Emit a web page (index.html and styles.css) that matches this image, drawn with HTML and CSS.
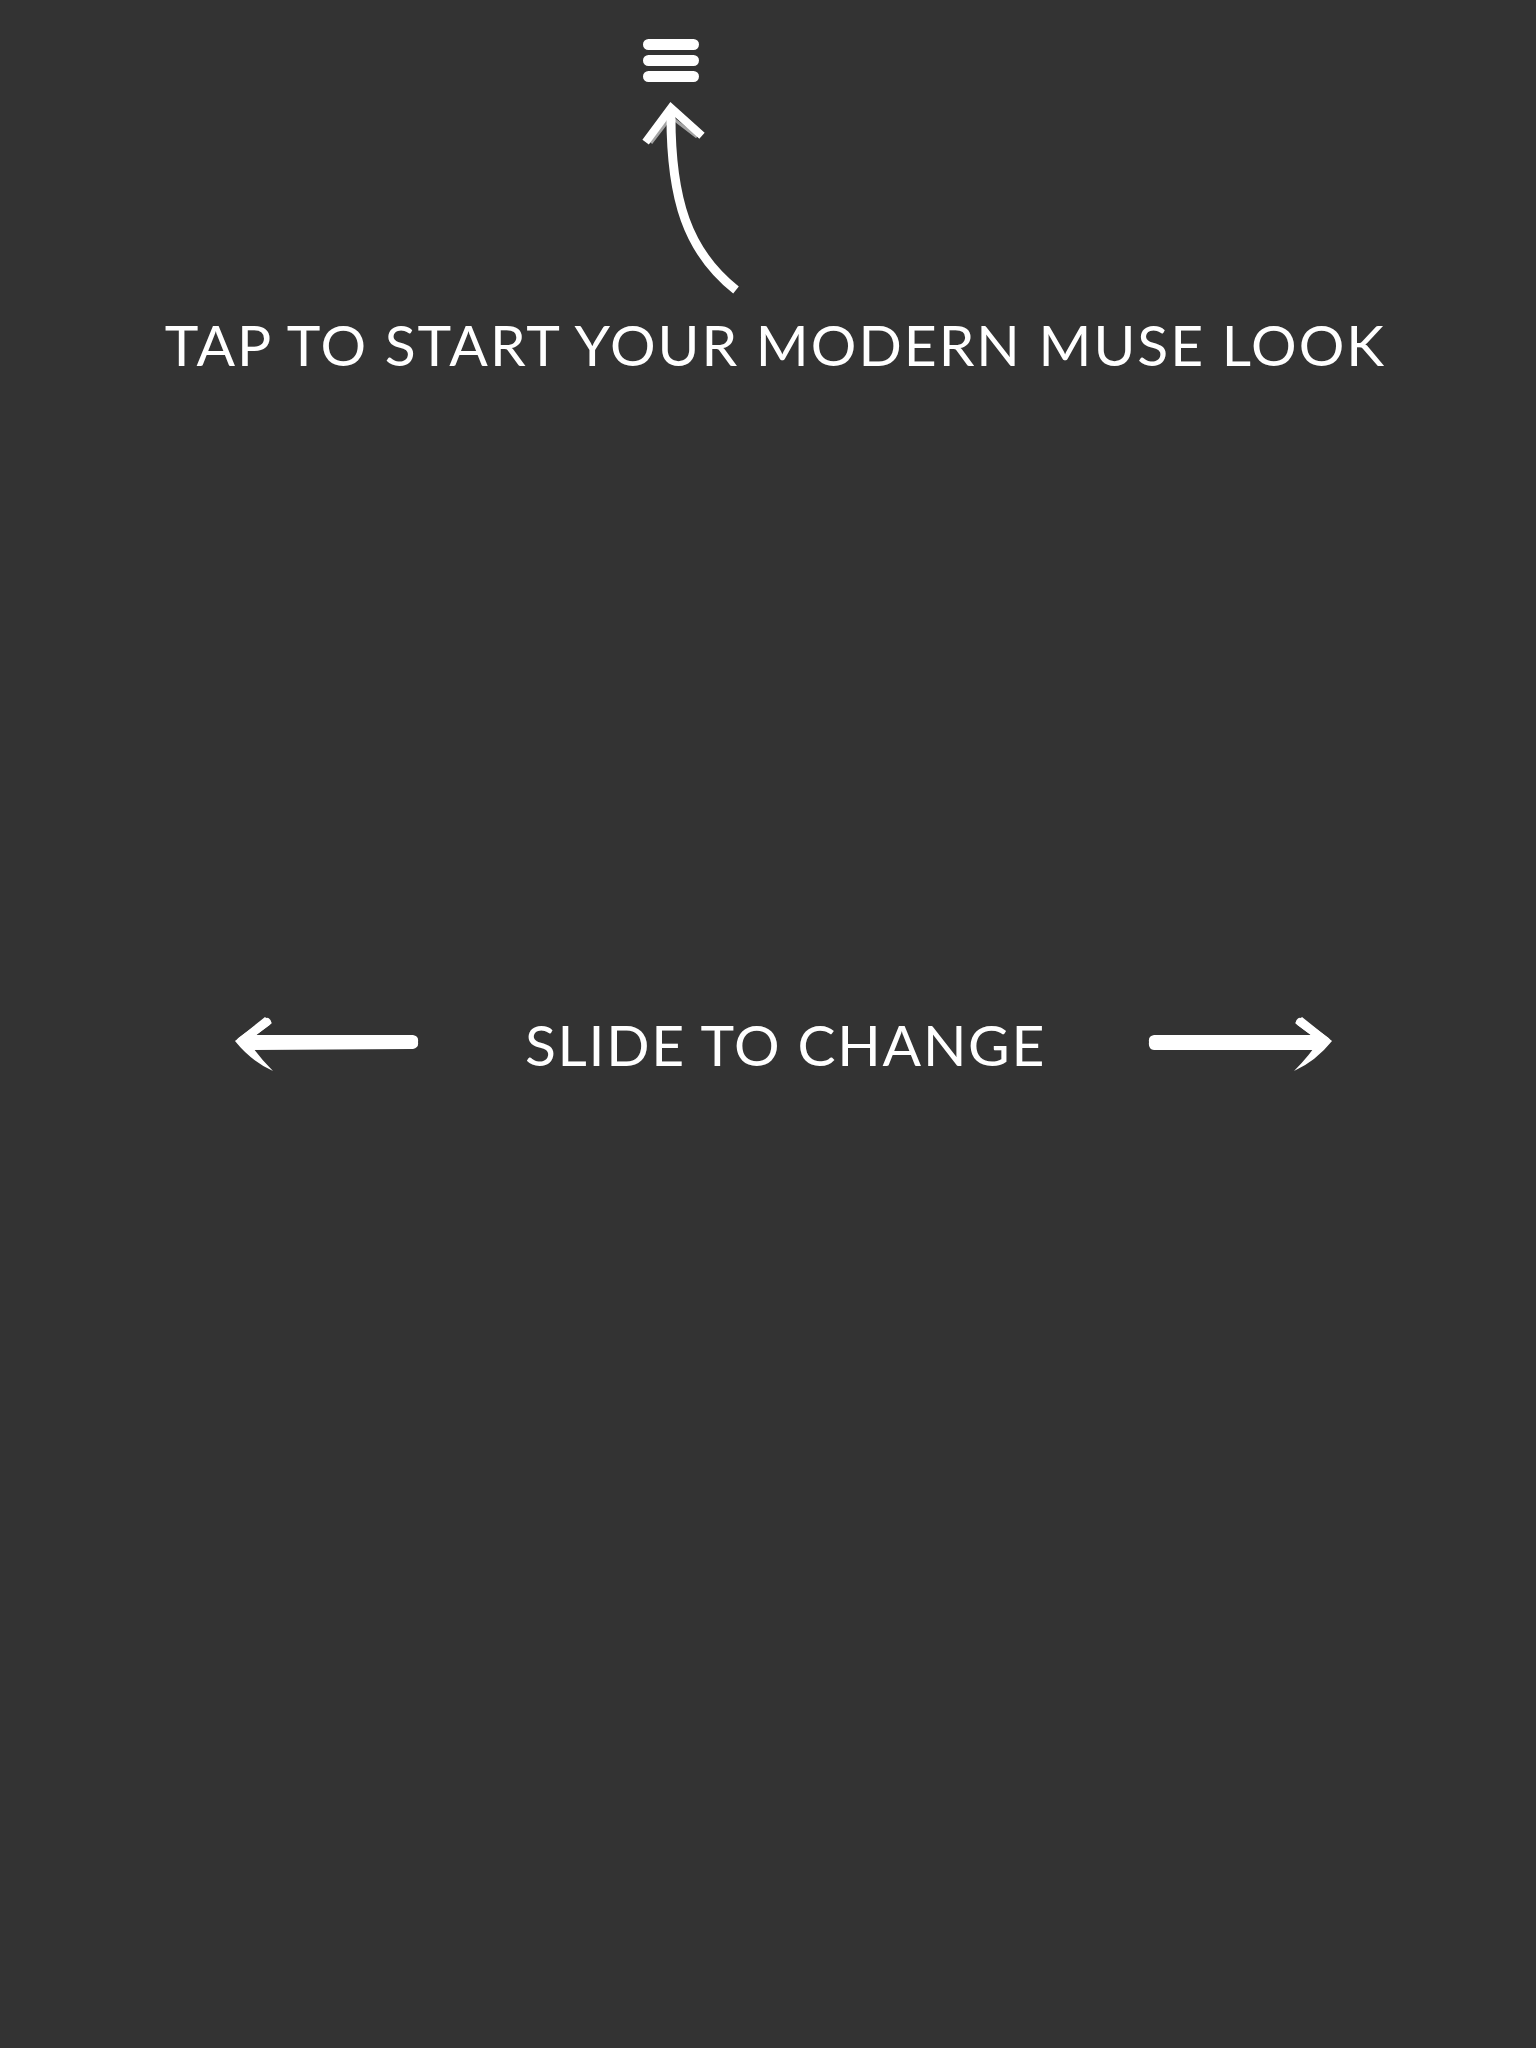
FILE: index.html
```html
<!DOCTYPE html>
<html lang="en">
<head>
<meta charset="utf-8">
<title>Modern Muse</title>
<link rel="stylesheet" href="styles.css">
</head>
<body>
<header class="top">
  <svg class="menu" viewBox="0 0 56 43" width="56" height="43" aria-label="Menu">
    <rect x="0" y="0" width="56" height="11" rx="5.5" fill="#fff"/>
    <rect x="0" y="16" width="56" height="11" rx="5.5" fill="#fff"/>
    <rect x="0" y="32" width="56" height="11" rx="5.5" fill="#fff"/>
  </svg>
  <svg class="curve" viewBox="640 100 105 200" width="105" height="200" aria-hidden="true">
    <path d="M671 110 C670 200 688 252 736 290" fill="none" stroke="#fff" stroke-width="9"/>
    <path d="M648 139 L671 108 L699 133" fill="none" stroke="#fff" stroke-width="8" stroke-linecap="square" stroke-linejoin="miter"/>
    <path d="M651 143 L671 117 L697 137" fill="none" stroke="#fff" stroke-width="3" opacity="0.55"/>
  </svg>
  <h1 class="tap">TAP TO START YOUR MODERN MUSE LOOK</h1>
</header>
<section class="slide">
  <svg class="arrow arrow-left" viewBox="0 0 184 56" width="184" height="56" aria-hidden="true">
    <path d="M12 18 L178 18 Q184 19 183 25 Q184 31 178 32 L12 33 Z" fill="#fff"/>
    <path d="M0 24 L30 0 L37 6 L12 25 Z" fill="#fff"/>
    <path d="M0 24 L12 22 Q22 38 38 54 Q16 44 0 24 Z" fill="#fff"/>
    <path d="M6 24 L32 5" fill="none" stroke="#fff" stroke-width="8" stroke-linecap="round"/>
  </svg>
  <p class="hint">SLIDE TO CHANGE</p>
  <svg class="arrow arrow-right" viewBox="0 0 184 56" width="184" height="56" aria-hidden="true">
    <path d="M172 18 L6 18 Q0 19 1 25 Q0 32 6 33 L172 33 Z" fill="#fff"/>
    <path d="M184 24 L154 0 L147 6 L172 25 Z" fill="#fff"/>
    <path d="M184 24 L172 22 Q162 38 146 54 Q168 44 184 24 Z" fill="#fff"/>
    <path d="M178 24 L152 5" fill="none" stroke="#fff" stroke-width="8" stroke-linecap="round"/>
  </svg>
</section>
</body>
</html>
```
FILE: styles.css
```css
html, body {
  margin: 0;
  padding: 0;
  background: #333333;
  color: #ffffff;
  font-family: "Lato", "Liberation Sans", sans-serif;
}

body {
  min-height: 2048px;
}

.top {
  display: flex;
  flex-direction: column;
  padding-top: 39px;
}

.menu {
  display: block;
  margin-left: 643px;
}

.curve {
  display: block;
  margin-left: 640px;
  margin-top: 18px;
}

.tap {
  margin: 16px 0 0 0;
  padding-left: 15px;
  text-align: center;
  font-size: 57px;
  line-height: 1;
  font-weight: 400;
  letter-spacing: 2px;
  white-space: nowrap;
}

.slide {
  display: flex;
  justify-content: center;
  align-items: center;
  margin-top: 643px;
  padding-left: 31px;
}

.arrow {
  display: block;
  flex: none;
}

.arrow-left {
  margin-right: 106px;
}

.arrow-right {
  margin-left: 102px;
}

.hint {
  margin: 0;
  font-size: 57px;
  line-height: 1;
  font-weight: 400;
  letter-spacing: 1.7px;
  white-space: nowrap;
}
```
